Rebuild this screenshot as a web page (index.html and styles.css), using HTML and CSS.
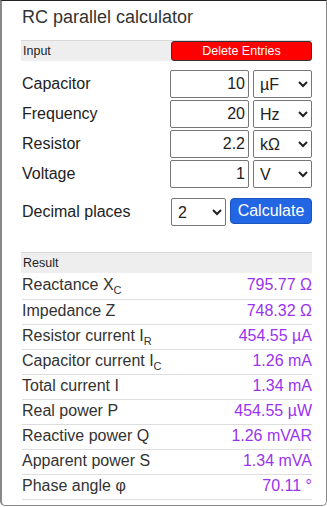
FILE: index.html
```html
<!DOCTYPE html>
<html lang="en">
<head>
  <meta charset="UTF-8" />
  <meta name="viewport" content="width=device-width, initial-scale=1.0"/>
  <title>RC parallel calculator</title>
  <link rel="stylesheet" href="styles.css">
</head>
<body>

  <div class="calc">
    <h1>RC parallel calculator</h1>

    <div class="bar">
      <span>Input</span>
      <button class="delete-btn" type="button">Delete Entries</button>
    </div>

    <div class="rows">
      <div class="row">
        <label>Capacitor</label>
        <div class="field">
          <input type="text" value="10">
          <select><option>µF</option><option>nF</option><option>pF</option></select>
        </div>
      </div>
      <div class="row">
        <label>Frequency</label>
        <div class="field">
          <input type="text" value="20">
          <select><option>Hz</option><option>kHz</option></select>
        </div>
      </div>
      <div class="row">
        <label>Resistor</label>
        <div class="field">
          <input type="text" value="2.2">
          <select><option>kΩ</option><option>Ω</option></select>
        </div>
      </div>
      <div class="row">
        <label>Voltage</label>
        <div class="field">
          <input type="text" value="1">
          <select><option>V</option><option>mV</option></select>
        </div>
      </div>
    </div>

    <div class="row decimals">
      <label>Decimal places</label>
      <div class="field">
        <select class="places"><option>2</option><option>3</option></select>
        <button class="calc-btn" type="button">Calculate</button>
      </div>
    </div>

    <div class="bar result-bar">
      <span>Result</span>
    </div>

    <table class="results">
      <tr><td>Reactance X<sub>C</sub></td><td class="val">795.77 Ω</td></tr>
      <tr><td>Impedance Z</td><td class="val">748.32 Ω</td></tr>
      <tr><td>Resistor current I<sub>R</sub></td><td class="val">454.55 µA</td></tr>
      <tr><td>Capacitor current I<sub>C</sub></td><td class="val">1.26 mA</td></tr>
      <tr><td>Total current I</td><td class="val">1.34 mA</td></tr>
      <tr><td>Real power P</td><td class="val">454.55 µW</td></tr>
      <tr><td>Reactive power Q</td><td class="val">1.26 mVAR</td></tr>
      <tr><td>Apparent power S</td><td class="val">1.34 mVA</td></tr>
      <tr><td>Phase angle φ</td><td class="val">70.11 °</td></tr>
    </table>
  </div>

</body>
</html>
```

FILE: styles.css
```css
body {
  margin: 0;
  font-family: "Liberation Sans", Arial, sans-serif;
  color: #222;
  background: white;
}

.calc {
  box-sizing: border-box;
  width: 327px;
  height: 506px;
  padding: 0 14px 0 20px;
  border: 1px solid #888;
  border-left: 2px solid #888;
  border-top-color: #222;
  border-radius: 0 0 5px 5px;
}

h1 {
  margin: 0;
  padding-top: 6px;
  height: 33px;
  font-size: 18px;
  font-weight: normal;
  color: #333;
}

.bar {
  display: flex;
  align-items: center;
  justify-content: space-between;
  height: 20px;
  margin-left: -1px;
  background: #eee;
  border-top: 1px solid #d8d8d8;
  font-size: 12.5px;
}

.bar span {
  padding-left: 2px;
}

.delete-btn {
  width: 141px;
  height: 20px;
  margin: 0;
  padding: 0;
  background: #ff0000;
  color: white;
  border: 1px solid #333;
  border-radius: 3px;
  font-family: inherit;
  font-size: 12.5px;
}

.rows {
  margin-top: 9px;
}

.row {
  display: flex;
  align-items: center;
  justify-content: space-between;
  height: 28px;
  margin-bottom: 2px;
  font-size: 16px;
}

.field {
  display: flex;
  gap: 4px;
}

.field input {
  box-sizing: border-box;
  width: 79px;
  height: 28px;
  padding: 0 3px;
  border: 1px solid #767676;
  border-radius: 2px;
  text-align: right;
  font-family: inherit;
  font-size: 16px;
  color: #222;
}

.field select {
  box-sizing: border-box;
  width: 59px;
  height: 28px;
  padding: 0 2px;
  border: 1px solid #767676;
  border-radius: 2px;
  font-family: inherit;
  font-size: 16px;
  color: #222;
  background: white;
}

.decimals {
  margin-top: 10px;
}

.field select.places {
  width: 55px;
}

.calc-btn {
  height: 26px;
  width: 82px;
  margin: 0;
  padding: 0;
  background: #2266e3;
  color: white;
  border: 1px solid #1d55c0;
  border-radius: 4px;
  font-family: inherit;
  font-size: 16px;
}

.result-bar {
  margin-top: 26px;
}

.results {
  width: 100%;
  border-collapse: collapse;
  margin-top: 1px;
  font-size: 16px;
}

.results tr {
  height: 25px;
}

.results td {
  box-sizing: border-box;
  height: 25px;
  padding: 0 0 2px 0;
  line-height: 20px;
  border-bottom: 1px solid #ddd;
  color: #333;
}

.results td.val {
  text-align: right;
  color: #9933ee;
  padding-right: 0;
}

.results sub {
  font-size: 11px;
  vertical-align: -4px;
  line-height: 0;
}
```
